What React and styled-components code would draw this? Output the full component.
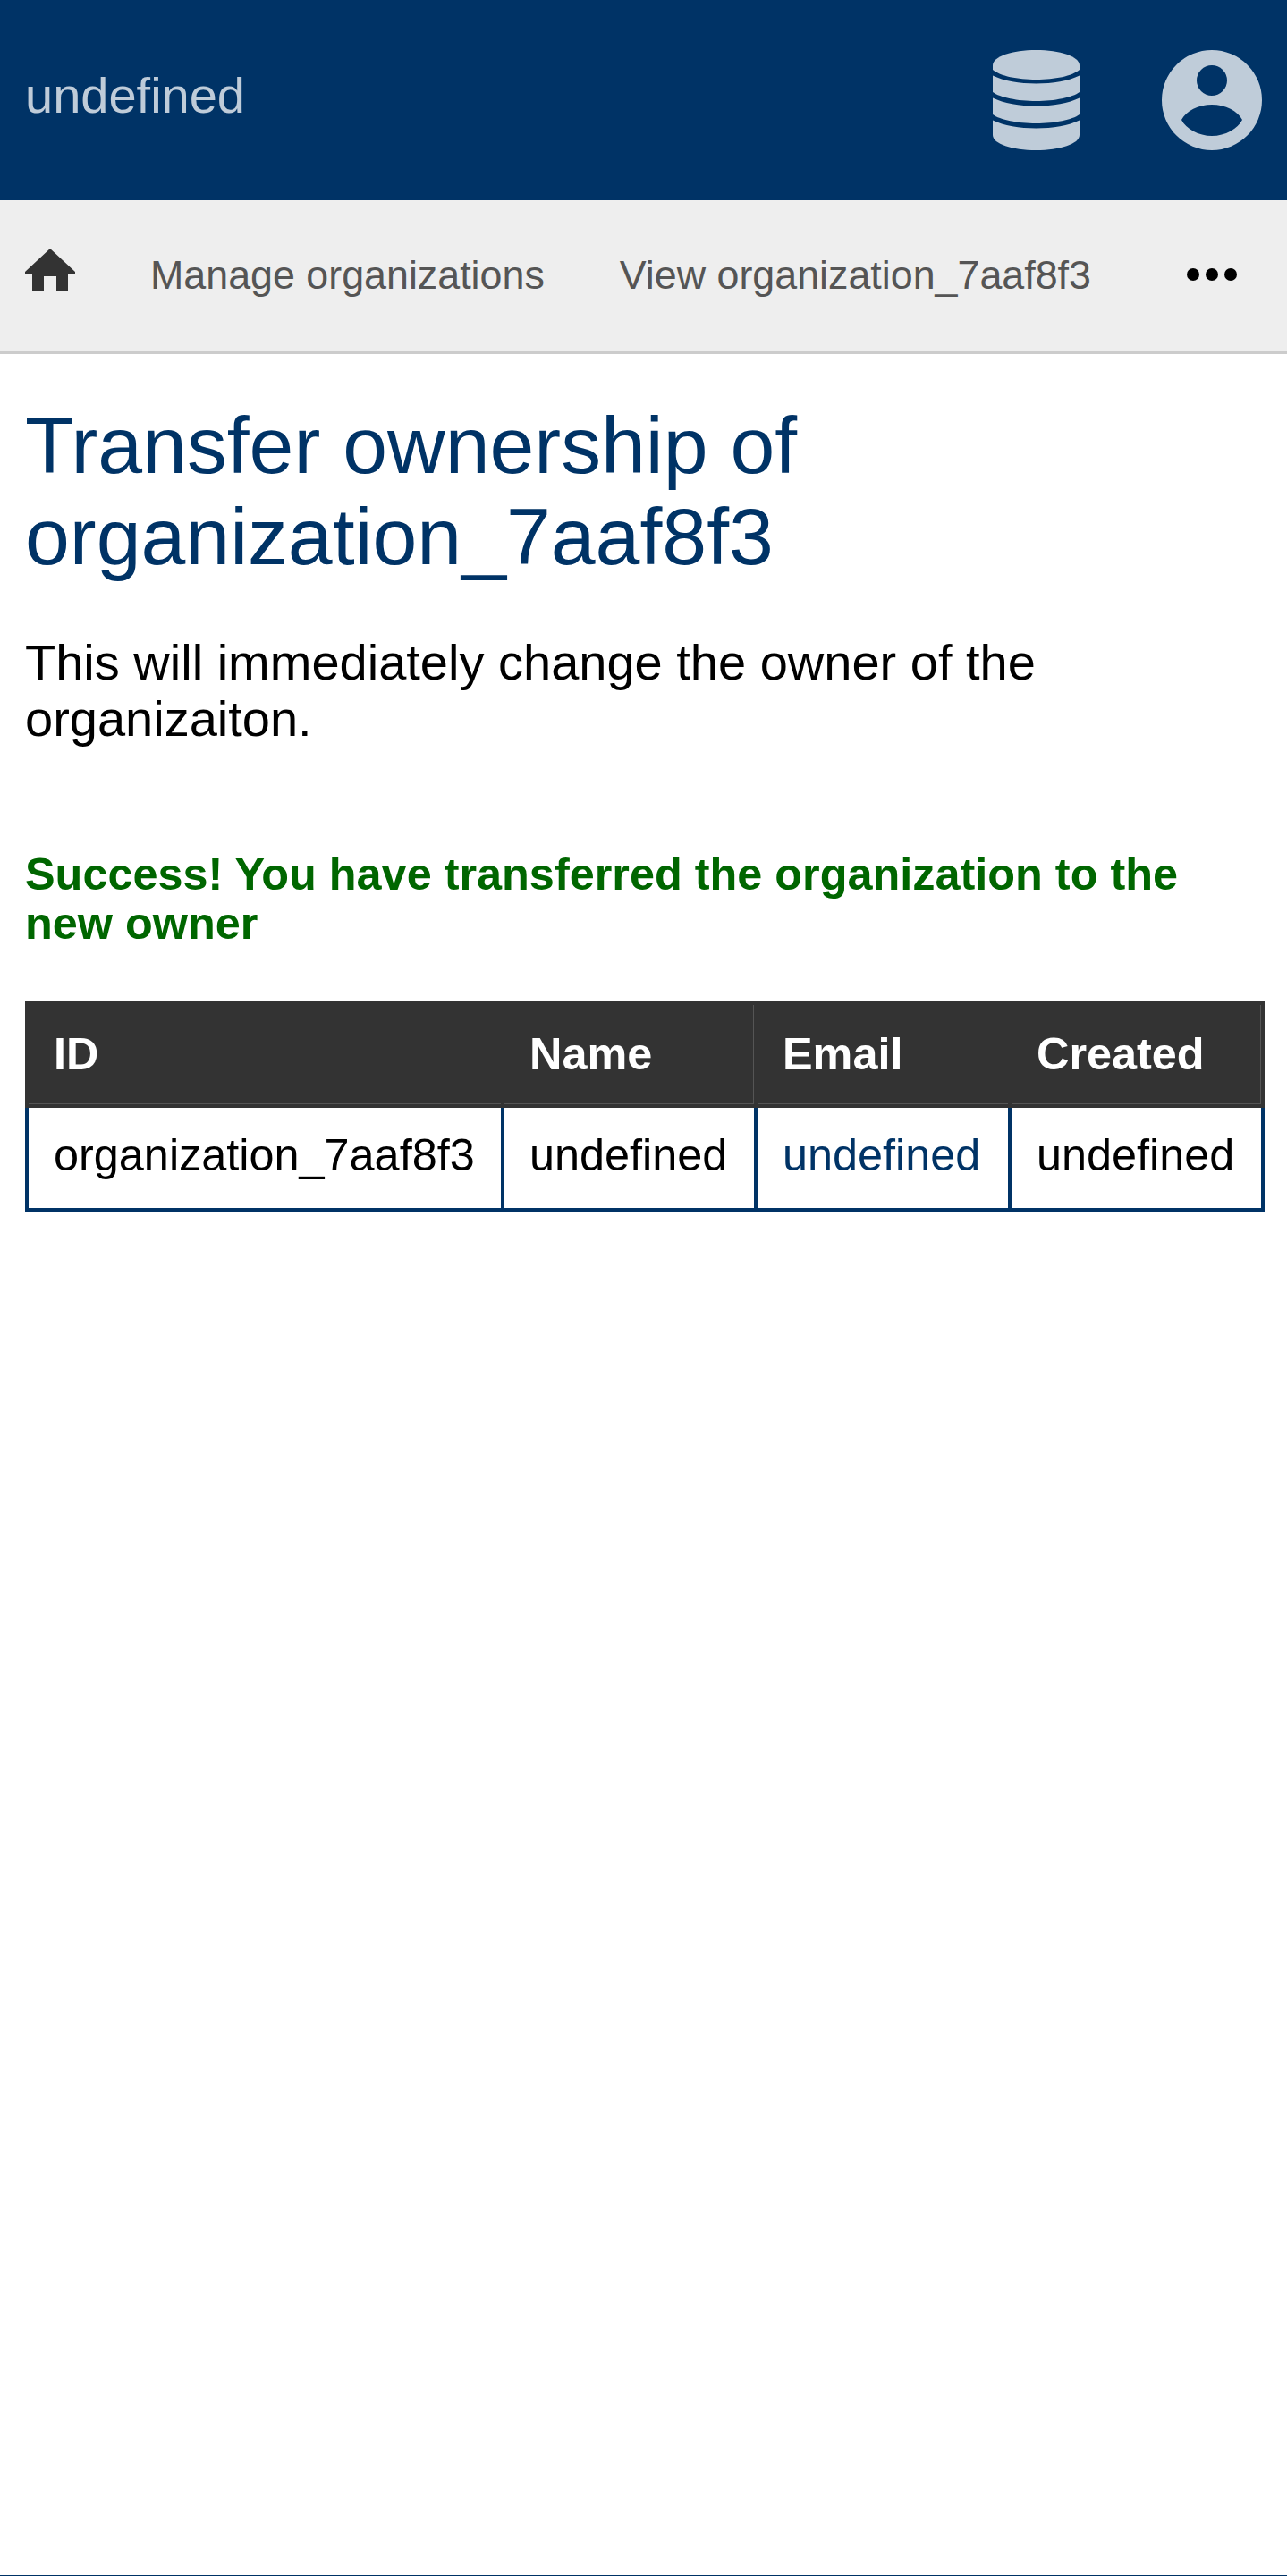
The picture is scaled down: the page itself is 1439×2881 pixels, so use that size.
import styled, { createGlobalStyle } from 'styled-components';

const navy = '#003366';
const pale = '#bfccd9';

const Global = createGlobalStyle`
    html, body {
        margin: 0;
        padding: 0;
        background: #fff;
    }

    body {
        font-family: "Liberation Sans", Arial, sans-serif;
        font-size: 28px;
        line-height: 1.15;
        color: #000;
    }
`;

const DatabaseIcon = () => (
    <Icon width="97" height="112" viewBox="0 0 97 112" fill={pale}>
        <path d="M0 17C0 7 22 0 48.5 0S97 7 97 17V22C89 29 69 33 48.5 33S8 29 0 22Z" />
        <path d="M0 28.5C12 34.5 30 37.5 48.5 37.5S85 34.5 97 28.5V47C89 53 69 57 48.5 57S8 53 0 47Z" />
        <path d="M0 53.5C12 59.5 30 62.5 48.5 62.5S85 59.5 97 53.5V72C89 78 69 82 48.5 82S8 78 0 72Z" />
        <path d="M0 78.5C12 84.5 30 87.5 48.5 87.5S85 84.5 97 78.5V95C97 105 75 112 48.5 112S0 105 0 95Z" />
    </Icon>
);

const UserIcon = () => (
    <Icon width="112" height="112" viewBox="0 0 112 112" fill={pale}>
        <path
            fillRule="evenodd"
            d="M56 0A56 56 0 1 1 56 112A56 56 0 1 1 56 0ZM56 17A17 17 0 1 0 56 51A17 17 0 1 0 56 17ZM22 78C27 88 41 96 56 96S85 88 90 78C85 68 71 61 56 61S27 68 22 78Z"
        />
    </Icon>
);

const HomeIcon = () => (
    <Icon width="56" height="48" viewBox="0 0 56 48" fill="#333333">
        <path d="M28 0L56 26V28H48V47H35V31H21V47H8V28H0V26Z" />
    </Icon>
);

const App = () => {
    return (
        <Page>
            <Global />
            <Header>
                <SiteTitle>undefined</SiteTitle>
                <HeaderIcons>
                    <DatabaseIcon />
                    <UserIcon />
                </HeaderIcons>
            </Header>
            <Nav>
                <HomeLink href="#">
                    <HomeIcon />
                </HomeLink>
                <NavLink href="#">Manage organizations</NavLink>
                <NavLink href="#">View organization_7aaf8f3</NavLink>
                <MoreDots>
                    <Dot />
                    <Dot />
                    <Dot />
                </MoreDots>
            </Nav>
            <Main>
                <Title>Transfer ownership of organization_7aaf8f3</Title>
                <Lead>This will immediately change the owner of the organizaiton.</Lead>
                <Success>Success! You have transferred the organization to the new owner</Success>
                <Table>
                    <colgroup>
                        <Col $width={532} />
                        <Col $width={283} />
                        <Col $width={284} />
                        <Col $width={283} />
                    </colgroup>
                    <thead>
                        <tr>
                            <Th>ID</Th>
                            <Th $rule>Name</Th>
                            <Th>Email</Th>
                            <Th $rule>Created</Th>
                        </tr>
                    </thead>
                    <tbody>
                        <tr>
                            <Td>organization_7aaf8f3</Td>
                            <Td>undefined</Td>
                            <Td>
                                <EmailLink href="#">undefined</EmailLink>
                            </Td>
                            <Td>undefined</Td>
                        </tr>
                    </tbody>
                </Table>
            </Main>
            <Footer />
        </Page>
    );
};

export default App;

const Page = styled.div`
    min-height: 2881px;
    display: flex;
    flex-direction: column;
    overflow-x: hidden;
`;

const Icon = styled.svg`
    display: block;
`;

const Header = styled.header`
    height: 224px;
    box-sizing: border-box;
    padding: 56px 28px;
    background-color: ${navy};
    display: flex;
    justify-content: space-between;
    align-items: center;
`;

const SiteTitle = styled.div`
    font-size: 56px;
    color: ${pale};
    margin-bottom: 10px;
`;

const HeaderIcons = styled.div`
    display: flex;
    align-items: center;
    gap: 92px;
`;

const Nav = styled.nav`
    height: 172px;
    box-sizing: border-box;
    padding: 0 28px;
    background-color: #eeeeee;
    border-bottom: 4px solid #cccccc;
    display: flex;
    align-items: center;
`;

const HomeLink = styled.a`
    display: block;
    margin-right: 84px;
    margin-top: -12px;
`;

const NavLink = styled.a`
    font-size: 44.8px;
    color: #555555;
    text-decoration: none;
    white-space: nowrap;

    & + & {
        margin-left: 84px;
    }
`;

const MoreDots = styled.div`
    margin-left: auto;
    margin-top: -2px;
    width: 113px;
    display: flex;
    justify-content: center;
    gap: 7px;
`;

const Dot = styled.span`
    width: 14px;
    height: 14px;
    border-radius: 50%;
    background-color: #000;
`;

const Main = styled.main`
    flex: 1;
    padding: 0 28px;
`;

const Title = styled.h1`
    margin: 51px 0 0;
    font-size: 89.6px;
    font-weight: 400;
    line-height: 102px;
    color: ${navy};
`;

const Lead = styled.p`
    margin: 58px 0 0;
    font-size: 56px;
    line-height: 63px;
`;

const Success = styled.p`
    margin: 115px 0 0;
    font-size: 50.4px;
    font-weight: 700;
    line-height: 1.1;
    color: #006600;
`;

const Table = styled.table`
    width: calc(100% + 3px);
    table-layout: fixed;
    margin-top: 59px;
    border-collapse: collapse;
    font-size: 50.4px;
`;

const Col = styled.col`
    width: ${(props) => props.$width}px;
`;

const Th = styled.th`
    padding: 26px 28px 27px;
    text-align: left;
    font-weight: 700;
    color: #fff;
    background-color: #333333;
    border: 4px solid #333333;
    box-shadow: inset 0 -1px 0 #555555 ${(props) => (props.$rule ? ', inset -1px 0 0 #555555' : '')};
`;

const Td = styled.td`
    padding: 24px 28px 30px;
    border: 4px solid ${navy};
    white-space: nowrap;
`;

const EmailLink = styled.a`
    color: ${navy};
    text-decoration: none;
`;

const Footer = styled.footer`
    border-top: 1px solid ${navy};
`;
